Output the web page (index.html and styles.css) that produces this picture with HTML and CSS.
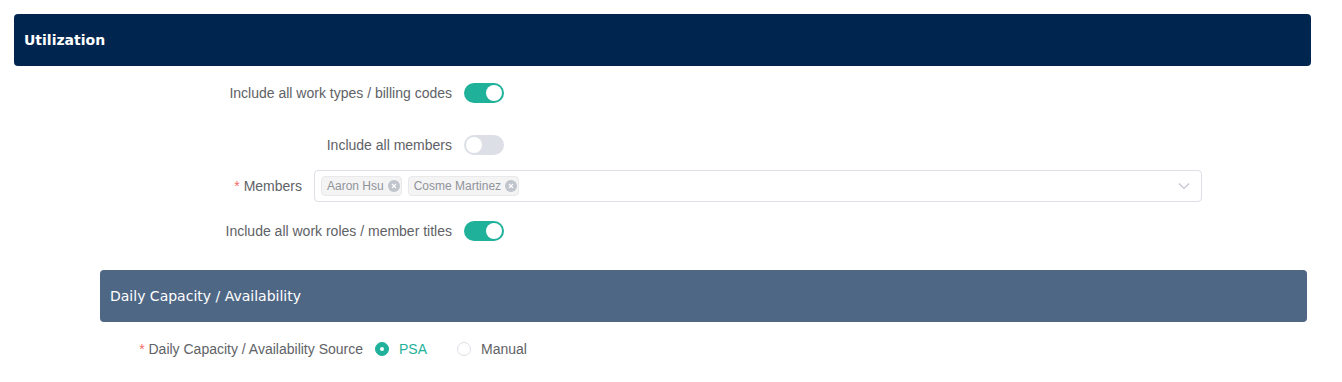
FILE: index.html
```html
<!DOCTYPE html>
<html>
<head>
<meta charset="utf-8">
<link rel="stylesheet" href="styles.css">
</head>
<body>
<div class="page">
  <div class="section-head primary">Utilization</div>

  <div class="row row-1">
    <div class="label wide">Include all work types / billing codes</div>
    <span class="switch on"><span class="knob"></span></span>
  </div>

  <div class="row row-2">
    <div class="label wide">Include all members</div>
    <span class="switch"><span class="knob"></span></span>
  </div>

  <div class="row row-3">
    <div class="label narrow"><span class="req">*</span> Members</div>
    <div class="select">
      <span class="tag">Aaron Hsu <span class="tag-close"><svg width="12" height="12" viewBox="0 0 12 12"><circle cx="6" cy="6" r="6" fill="#c0c4cc"/><path d="M4 4 L8 8 M8 4 L4 8" stroke="#fff" stroke-width="1.1"/></svg></span></span>
      <span class="tag">Cosme Martinez <span class="tag-close"><svg width="12" height="12" viewBox="0 0 12 12"><circle cx="6" cy="6" r="6" fill="#c0c4cc"/><path d="M4 4 L8 8 M8 4 L4 8" stroke="#fff" stroke-width="1.1"/></svg></span></span>
      <svg class="chevron" width="14" height="14" viewBox="0 0 14 14"><path d="M2 4.5 L7 9.5 L12 4.5" fill="none" stroke="#c0c4cc" stroke-width="1.1"/></svg>
    </div>
  </div>

  <div class="row row-4">
    <div class="label wide">Include all work roles / member titles</div>
    <span class="switch on"><span class="knob"></span></span>
  </div>

  <div class="section-head secondary">Daily Capacity / Availability</div>

  <div class="row row-5">
    <div class="label medium"><span class="req">*</span> Daily Capacity / Availability Source</div>
    <div class="radios">
      <span class="radio checked"><span class="dot"></span><span class="radio-text">PSA</span></span>
      <span class="radio"><span class="dot"></span><span class="radio-text">Manual</span></span>
    </div>
  </div>
</div>
</body>
</html>
```

FILE: styles.css
```css
html, body {
  margin: 0;
  padding: 0;
  background: #fff;
}

.page {
  padding: 14px 31px 0 14px;
  font-family: "Liberation Sans", Arial, sans-serif;
  font-size: 14px;
  color: #606266;
}

.section-head {
  height: 52px;
  display: flex;
  align-items: center;
  padding-left: 10px;
  border-radius: 4px;
  color: #fff;
  font-family: "DejaVu Sans", Verdana, sans-serif;
  box-sizing: border-box;
}

.primary {
  background: #00264f;
  font-weight: bold;
  font-size: 14px;
  margin-bottom: 11px;
}

.secondary {
  background: #4e6785;
  font-size: 14px;
  margin: 23px 4px 11px 86px;
}

.row {
  display: flex;
  align-items: center;
  height: 32px;
}

.row-1 { margin-bottom: 20px; }
.row-2 { margin-bottom: 9px; }
.row-3 { margin-bottom: 13px; }

.label {
  box-sizing: border-box;
  padding-right: 12px;
  text-align: right;
  flex: none;
  line-height: 32px;
}

.wide { width: 450px; }
.narrow { width: 300px; }
.medium { width: 361px; }

.req {
  color: #f56c6c;
}

.switch {
  position: relative;
  width: 40px;
  height: 20px;
  border-radius: 10px;
  background: #dcdfe6;
  flex: none;
}

.switch.on {
  background: #1fb19a;
}

.knob {
  position: absolute;
  top: 2px;
  left: 2px;
  width: 16px;
  height: 16px;
  border-radius: 50%;
  background: #fff;
}

.switch.on .knob {
  left: 22px;
}

.select {
  position: relative;
  width: 888px;
  height: 32px;
  box-sizing: border-box;
  border: 1px solid #dcdfe6;
  border-radius: 4px;
  display: flex;
  align-items: center;
  gap: 6px;
  padding-left: 6px;
}

.tag {
  display: inline-flex;
  align-items: center;
  height: 20px;
  box-sizing: border-box;
  padding: 0 1px 0 5px;
  background: #f4f4f5;
  border: 1px solid #e9e9eb;
  border-radius: 4px;
  color: #909399;
  font-size: 12px;
  gap: 4px;
}

.tag-close {
  display: inline-flex;
}

.chevron {
  position: absolute;
  right: 10px;
  top: 8px;
}

.radios {
  display: flex;
  align-items: center;
}

.radio {
  display: inline-flex;
  align-items: center;
  margin-right: 30px;
  color: #606266;
}

.radio .dot {
  width: 14px;
  height: 14px;
  box-sizing: border-box;
  border: 1px solid #dcdfe6;
  border-radius: 50%;
  background: #fff;
  position: relative;
  flex: none;
}

.radio.checked .dot {
  background: #1fb19a;
  border-color: #1fb19a;
}

.radio.checked .dot::after {
  content: "";
  position: absolute;
  left: 4px;
  top: 4px;
  width: 4px;
  height: 4px;
  border-radius: 50%;
  background: #fff;
}

.radio-text {
  padding-left: 10px;
}

.radio.checked .radio-text {
  color: #1fb19a;
}
```
